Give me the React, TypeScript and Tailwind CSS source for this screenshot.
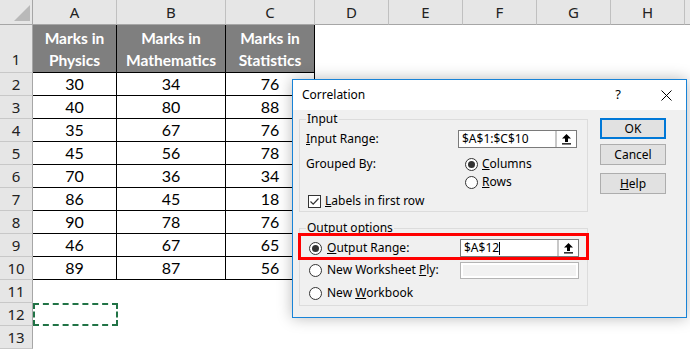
import type { ReactNode } from "react";

const COLS = ["A", "B", "C", "D", "E", "F", "G", "H"];

const DATA: number[][] = [
  [30, 34, 76],
  [40, 80, 88],
  [35, 67, 76],
  [45, 56, 78],
  [70, 36, 34],
  [86, 45, 18],
  [90, 78, 76],
  [46, 67, 65],
  [89, 87, 56],
];

const HEADS = [
  ["Marks in", "Physics"],
  ["Marks in", "Mathematics"],
  ["Marks in", "Statistics"],
];

const uiFont = { fontFamily: '"Noto Sans", "Open Sans", sans-serif' };
const cellFont = { fontFamily: 'Lato, "Noto Sans", sans-serif' };

function Radio({ on }: { on?: boolean }) {
  return (
    <span className="w-[13px] h-[13px] rounded-full border border-[#333] bg-white flex items-center justify-center shrink-0">
      {on && <span className="w-[7px] h-[7px] rounded-full bg-[#333]" />}
    </span>
  );
}

function Check() {
  return (
    <span className="w-[13px] h-[13px] border border-[#333] bg-white flex items-center justify-center shrink-0">
      <svg width="11" height="11" viewBox="0 0 11 11">
        <path d="M1.5 5.5 L4.2 8.2 L9.5 2.5" fill="none" stroke="#333" strokeWidth="1.2" />
      </svg>
    </span>
  );
}

function RefBox({ value, caret }: { value: string; caret?: boolean }) {
  return (
    <div className="w-[119px] h-[18px] border border-[#7a7a7a] bg-white flex">
      <div className="flex-1 flex items-center pl-[3px] text-[12px] text-black">
        {value}
        {caret && <span className="w-px h-[13px] bg-black" />}
      </div>
      <div className="w-[21px] border-l-2 border-[#c8c8c8] bg-white flex items-center justify-center">
        <svg width="11" height="12" viewBox="0 0 11 12">
          <path d="M5.5 1 L10 5.5 L7 5.5 L7 9 L4 9 L4 5.5 L1 5.5 Z" fill="#000" />
          <rect x="1" y="10.2" width="9" height="1.3" fill="#000" />
        </svg>
      </div>
    </div>
  );
}

function DisabledBox() {
  return (
    <div className="w-[119px] h-[17px] border border-[#b4b4b4] bg-white p-[2px]">
      <div className="w-full h-full bg-[#f2f2f2]" />
    </div>
  );
}

function Group({ label, children, className }: { label: string; children: ReactNode; className?: string }) {
  return (
    <div className={`relative w-[289px] border border-[#dcdcdc] ${className ?? ""}`}>
      <span className="absolute left-[6px] -top-[10px] px-px bg-[#f0f0f0] text-[12px] leading-[18px] text-black">
        {label}
      </span>
      {children}
    </div>
  );
}

function Btn({ children, primary }: { children: ReactNode; primary?: boolean }) {
  return (
    <button
      type="button"
      className={`w-[66px] h-[21px] bg-[#e1e1e1] text-[12px] text-black flex items-center justify-center ${
        primary ? "border-2 border-[#0078d7]" : "border border-[#adadad]"
      }`}
    >
      {children}
    </button>
  );
}

function Dialog() {
  return (
    <div
      className="absolute left-[292px] top-[79px] w-[395px] h-[239px] border border-[#1883d7] bg-[#f0f0f0] shadow-[0_0_14px_rgba(0,0,0,0.28)] flex flex-col"
      style={uiFont}
    >
      <div className="h-[30px] bg-white flex items-center pl-[9px] pr-[14px] text-[12px] text-black">
        <span className="flex-1">Correlation</span>
        <span className="text-[13px] mr-[40px]">?</span>
        <svg width="11" height="11" viewBox="0 0 11 11">
          <path d="M0.5 0.5 L10.5 10.5 M10.5 0.5 L0.5 10.5" stroke="#000" strokeWidth="1" />
        </svg>
      </div>
      <div className="flex flex-1">
        <div className="pl-[6px] pt-[9px] flex flex-col">
          <Group label="Input">
            <div className="pl-[6px] pt-[10px] pb-[1px] flex flex-col text-[12px] text-black">
              <div className="h-[18px] flex items-center">
                <span className="w-[152px]">
                  <u>I</u>nput Range:
                </span>
                <RefBox value="$A$1:$C$10" />
              </div>
              <div className="h-[18px] mt-[7px] flex items-center">
                <span className="w-[159px]">Grouped By:</span>
                <Radio on />
                <span className="ml-[4px]">
                  <u>C</u>olumns
                </span>
              </div>
              <div className="h-[18px] flex items-center">
                <span className="w-[159px]" />
                <Radio />
                <span className="ml-[4px]">
                  <u>R</u>ows
                </span>
              </div>
              <div className="h-[18px] mt-px flex items-center pl-[2px]">
                <Check />
                <span className="ml-[4px]">
                  <u>L</u>abels in first row
                </span>
              </div>
            </div>
          </Group>
          <Group label="Output options" className="mt-[16px]">
            <div className="relative pl-[9px] pt-[10px] pb-[3px] flex flex-col text-[12px] text-black">
              <div className="h-[18px] flex items-center">
                <Radio on />
                <span className="ml-[5px] w-[133px]">
                  <u>O</u>utput Range:
                </span>
                <RefBox value="$A$12" caret />
              </div>
              <div className="h-[18px] mt-[4px] flex items-center">
                <Radio />
                <span className="ml-[5px] w-[133px]">
                  New Worksheet <u>P</u>ly:
                </span>
                <DisabledBox />
              </div>
              <div className="h-[18px] mt-[5px] flex items-center">
                <Radio />
                <span className="ml-[5px]">
                  New <u>W</u>orkbook
                </span>
              </div>
              <div className="absolute -left-[2px] top-[4px] w-[291px] h-[27px] border-[3px] border-[#ff0000]" />
            </div>
          </Group>
        </div>
        <div className="ml-[12px] pt-[8px] flex flex-col gap-[5px]">
          <Btn primary>OK</Btn>
          <Btn>Cancel</Btn>
          <div className="mt-[3px]">
            <Btn>
              <u>H</u>elp
            </Btn>
          </div>
        </div>
      </div>
    </div>
  );
}

export default function App() {
  const rowHeads = Array.from({ length: 13 }, (_, i) => i + 1);
  return (
    <div className="relative w-[690px] h-[350px] bg-white overflow-hidden">
      <div className="grid grid-cols-[33px_84px_109px_89px_74px_74px_74px_74px_74px_1fr] grid-rows-[25px_48px_repeat(12,23px)]">
        {/* corner */}
        <div className="bg-[#e6e6e6] border-r border-b border-[#a6a6a6] flex items-end justify-end pr-[2px] pb-[3px]">
          <svg width="16" height="16" viewBox="0 0 16 16">
            <path d="M16 0 L16 16 L0 16 Z" fill="#b9b9b9" />
          </svg>
        </div>
        {COLS.map((c) => (
          <div
            key={c}
            className="bg-[#e6e6e6] border-r border-[#c0c0c0] border-b border-b-[#a6a6a6] flex items-center justify-center text-[15px] text-[#222]"
            style={uiFont}
          >
            {c}
          </div>
        ))}
        <div className="bg-[#e6e6e6] border-b border-[#a6a6a6]" />

        {rowHeads.map((r) => (
          <Row key={r} r={r} />
        ))}
      </div>

      {/* copy marquee on A12 */}
      <div className="absolute left-[33px] top-[303px] w-[85px] h-[23px] border-2 border-dashed border-[#217346]" />

      <Dialog />
    </div>
  );
}

function Row({ r }: { r: number }) {
  const cells = [];
  for (let c = 0; c < 9; c++) {
    if (r === 1 && c < 3) {
      cells.push(
        <div
          key={c}
          className="bg-[#7f7f7f] border-r border-b border-black flex flex-col items-center justify-end pb-[1px] text-[15.5px] leading-[22px] font-bold text-white"
          style={cellFont}
        >
          <span>{HEADS[c][0]}</span>
          <span>{HEADS[c][1]}</span>
        </div>
      );
    } else if (r >= 2 && r <= 10 && c < 3) {
      cells.push(
        <div
          key={c}
          className="border-r border-b border-black flex items-center justify-center text-[16px] text-black"
          style={cellFont}
        >
          {DATA[r - 2][c]}
        </div>
      );
    } else {
      cells.push(<div key={c} className="bg-white" />);
    }
  }
  return (
    <>
      <div
        className={`bg-[#e6e6e6] border-r border-[#a6a6a6] border-b border-b-[#c8c8c8] flex justify-center text-[15px] text-[#222] ${
          r === 1 ? "items-end pb-[2px]" : "items-center"
        }`}
        style={uiFont}
      >
        {r}
      </div>
      {cells}
    </>
  );
}
